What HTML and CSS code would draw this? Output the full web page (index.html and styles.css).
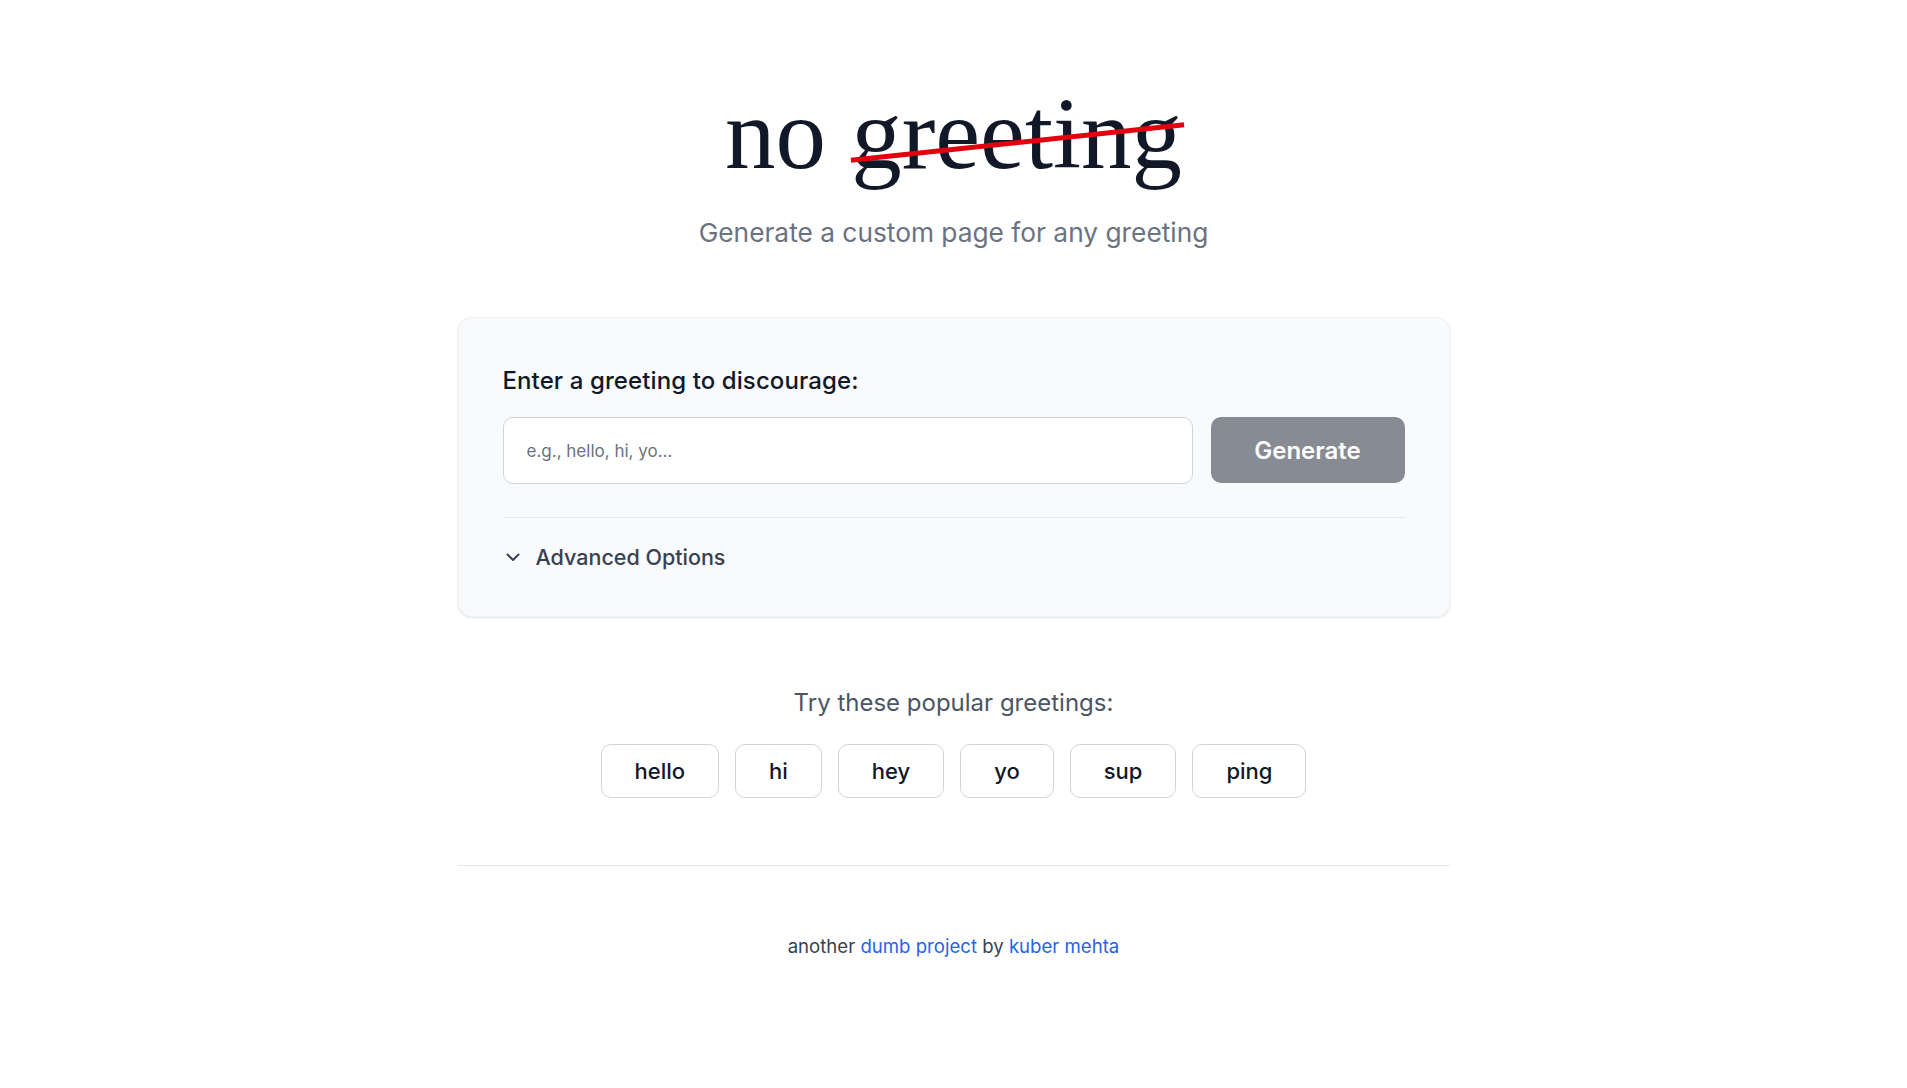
FILE: index.html
```html
<!DOCTYPE html>
<html lang="en">
<head>
<meta charset="utf-8">
<title>no greeting</title>
<link rel="stylesheet" href="styles.css">
</head>
<body>
<main class="container">
  <header class="hero">
    <h1 class="title">no <span class="strike">greeting</span></h1>
    <p class="subtitle">Generate a custom page for any greeting</p>
  </header>

  <section class="card">
    <label class="label" for="greeting">Enter a greeting to discourage:</label>
    <div class="row">
      <input id="greeting" class="input" type="text" placeholder="e.g., hello, hi, yo...">
      <button class="btn" type="button">Generate</button>
    </div>
    <div class="advanced">
      <svg class="chev" viewBox="0 0 20 20" width="20" height="20" aria-hidden="true"><path d="M4.5 7.5l5.5 5.5 5.5-5.5" fill="none" stroke="#374151" stroke-width="2" stroke-linecap="round" stroke-linejoin="round"/></svg>
      <span>Advanced Options</span>
    </div>
  </section>

  <section class="popular">
    <p class="popular-title">Try these popular greetings:</p>
    <div class="chips">
      <button class="chip" type="button">hello</button>
      <button class="chip" type="button">hi</button>
      <button class="chip" type="button">hey</button>
      <button class="chip" type="button">yo</button>
      <button class="chip" type="button">sup</button>
      <button class="chip" type="button">ping</button>
    </div>
  </section>

  <footer class="footer">
    <p>another <a href="#">dumb project</a> by <a href="#">kuber mehta</a></p>
  </footer>
</main>
</body>
</html>
```

FILE: styles.css
```css
* { box-sizing: border-box; }

body {
  margin: 0;
  background: #ffffff;
  font-family: Inter, "Noto Sans", "Liberation Sans", sans-serif;
  color: #111827;
}

.container {
  max-width: 1024px;
  margin: 0 auto;
  padding: 0 16px;
}

.hero {
  text-align: center;
  padding-top: 84px;
}

.title {
  margin: 0;
  font-family: "Liberation Serif", "DejaVu Serif", serif;
  font-weight: 400;
  font-size: 101px;
  line-height: 101px;
  color: #111827;
}

.strike {
  position: relative;
  display: inline-block;
}

.strike::after {
  content: "";
  position: absolute;
  left: -1px;
  right: -3px;
  top: 56px;
  height: 5px;
  background: #e3000f;
  transform: rotate(-6.1deg);
  transform-origin: center;
}

.subtitle {
  margin: 32px 0 0;
  font-size: 26.3px;
  line-height: 32px;
  color: #6b7280;
}

.card {
  margin-top: 68px;
  background: #f9fafb;
  border: 1px solid #f1f2f4;
  border-radius: 14px;
  box-shadow: 0 1px 3px rgba(0,0,0,0.08), 0 1px 2px rgba(0,0,0,0.04);
  padding: 47px 44px 43px;
}

.label {
  display: block;
  font-size: 24px;
  line-height: 32px;
  font-weight: 500;
  letter-spacing: 0.1px;
  color: #111827;
  margin-bottom: 20px;
}

.row {
  display: flex;
  align-items: flex-start;
  gap: 18px;
}

.input {
  flex: 1;
  height: 67px;
  border: 1px solid #d1d5db;
  border-radius: 10px;
  background: #ffffff;
  padding: 0 23px;
  font-family: inherit;
  font-size: 17px;
  color: #111827;
  outline: none;
}

.input::placeholder {
  color: #6b7280;
}

.btn {
  width: 194px;
  height: 66px;
  border: none;
  border-radius: 10px;
  background: #878b93;
  color: #ffffff;
  font-family: inherit;
  font-size: 24px;
  font-weight: 600;
  cursor: pointer;
}

.advanced {
  margin-top: 33px;
  border-top: 1px solid #e5e7eb;
  padding-top: 23px;
  display: flex;
  align-items: center;
  font-size: 21.5px;
  line-height: 32px;
  font-weight: 500;
  color: #374151;
}

.chev {
  margin-right: 13px;
  flex: none;
}

.popular {
  text-align: center;
  margin-top: 70px;
}

.popular-title {
  margin: 0;
  font-size: 24px;
  line-height: 32px;
  color: #4b5563;
}

.chips {
  margin-top: 25px;
  display: flex;
  justify-content: center;
  gap: 16px;
}

.chip {
  border: 1px solid #d1d5db;
  border-radius: 10px;
  background: #ffffff;
  padding: 12px 33px;
  font-family: inherit;
  font-size: 22px;
  line-height: 28px;
  font-weight: 500;
  color: #111827;
  cursor: pointer;
}

.footer {
  margin-top: 67px;
  border-top: 1px solid #e5e7eb;
  padding-top: 66px;
  text-align: center;
}

.footer p {
  margin: 0;
  font-size: 18.6px;
  line-height: 28px;
  color: #374151;
}

.footer a {
  color: #2563eb;
  text-decoration: none;
}
```
